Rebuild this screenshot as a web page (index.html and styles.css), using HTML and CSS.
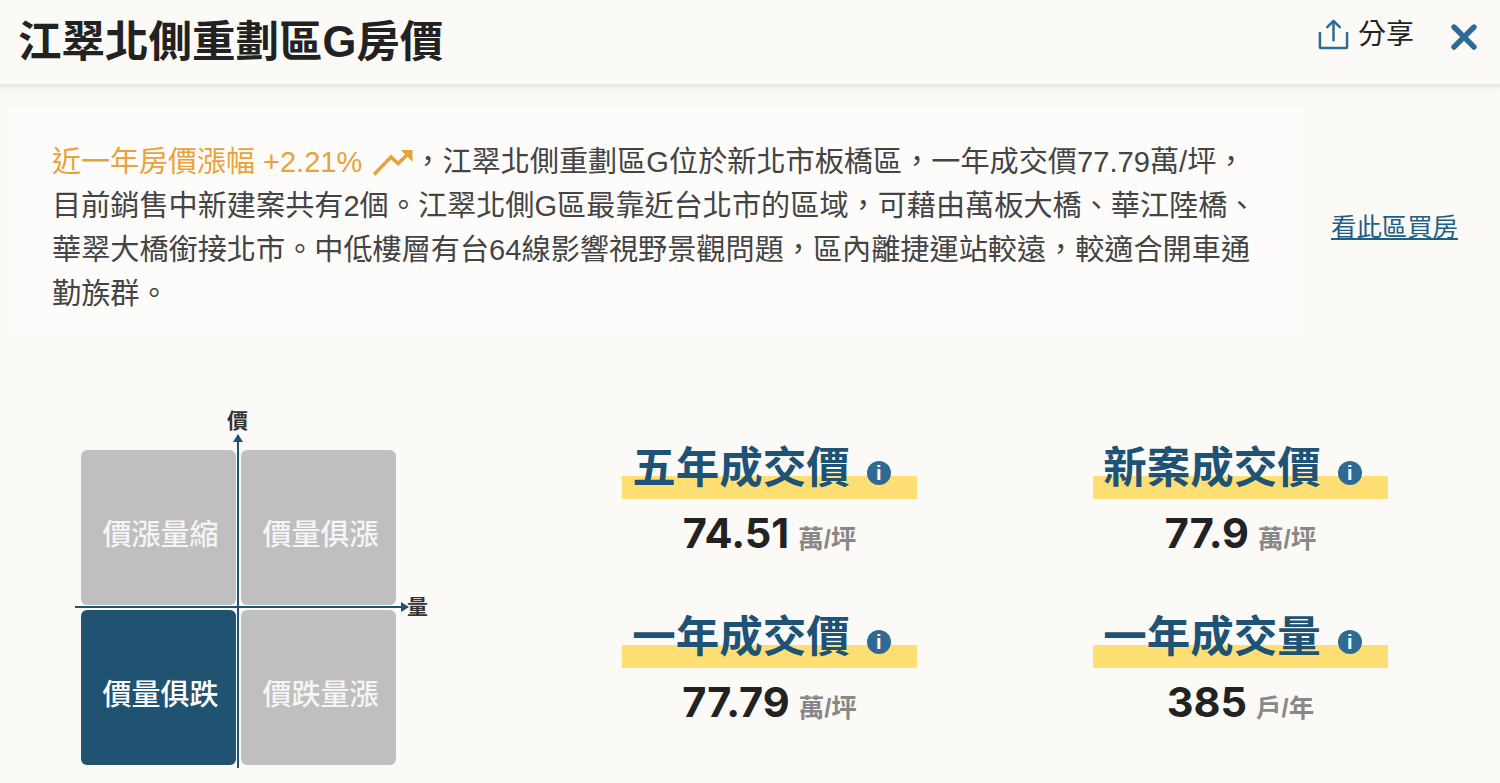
FILE: index.html
```html
<!DOCTYPE html>
<html lang="zh-Hant">
<head>
<meta charset="utf-8">
<title>江翠北側重劃區G房價</title>
<link rel="stylesheet" href="styles.css">
</head>
<body>
<header class="header">
  <h1 class="title">江翠北側重劃區G房價</h1>
  <div class="actions">
    <a class="share">
      <svg class="share-icon" viewBox="0 0 32 32" fill="none" stroke="#2f6a94" stroke-width="2.6" stroke-linecap="round" stroke-linejoin="round"><path d="M2 14.500V29a1 1 0 0 0 1 1h26a1 1 0 0 0 1-1V14.500"/><path d="M16 22V2.500"/><path d="M9.500 8.500 16 2l6.500 6.500"/></svg>
      <span>分享</span>
    </a>
    <svg class="close" viewBox="0 0 26 26" fill="none" stroke="#2f6a94" stroke-width="5.4" stroke-linecap="round"><path d="M3 3l20 20M23 3 3 23"/></svg>
  </div>
</header>
<section class="intro">
  <p class="intro-text"><span class="rise">近一年房價漲幅 +2.21%<svg class="trend" viewBox="0 0 40 26" fill="none" stroke="#e9a23b" stroke-width="3.6"><path d="M1 24.500 18 7l7 6.500L35 4"/><path d="M28 0H39.500V12Z" fill="#e9a23b" stroke="none"/></svg></span>&#xFF0C;江翠北側重劃區G位於新北市板橋區&#xFF0C;一年成交價77.79萬/坪&#xFF0C;目前銷售中新建案共有2個。江翠北側G區最靠近台北市的區域&#xFF0C;可藉由萬板大橋、華江陸橋、華翠大橋銜接北市。中低樓層有台64線影響視野景觀問題&#xFF0C;區內離捷運站較遠&#xFF0C;較適合開車通勤族群。</p>
  <a class="buy-link">看此區買房</a>
</section>
<main class="main">
  <div class="quad">
    <span class="axis-label axis-label-y">價</span>
    <span class="axis-label axis-label-x">量</span>
    <div class="cell">價漲量縮</div>
    <div class="cell">價量俱漲</div>
    <div class="cell cell-on">價量俱跌</div>
    <div class="cell">價跌量漲</div>
    <span class="axis axis-y"></span>
    <span class="axis axis-x"></span>
  </div>
  <div class="stats">
    <div class="stat">
      <div class="stat-title"><span>五年成交價</span><i class="info">i</i></div>
      <div class="stat-value">74.51<small>萬/坪</small></div>
    </div>
    <div class="stat">
      <div class="stat-title"><span>新案成交價</span><i class="info">i</i></div>
      <div class="stat-value">77.9<small>萬/坪</small></div>
    </div>
    <div class="stat">
      <div class="stat-title"><span>一年成交價</span><i class="info">i</i></div>
      <div class="stat-value">77.79<small>萬/坪</small></div>
    </div>
    <div class="stat">
      <div class="stat-title"><span>一年成交量</span><i class="info">i</i></div>
      <div class="stat-value">385<small>戶/年</small></div>
    </div>
  </div>
</main>
</body>
</html>
```
FILE: styles.css
```css
* { box-sizing: border-box; }
html, body { margin: 0; height: 783px; overflow: hidden; }
body {
  background: #fbfaf7;
  color: #222;
  font-family: "Liberation Sans", "Noto Sans CJK TC", sans-serif;
}
.header {
  height: 84px;
  display: flex;
  align-items: flex-start;
  justify-content: space-between;
  padding: 0 23px 0 18px;
  box-shadow: 0 3px 2px #e8e7e3, 0 6px 6px #f4f3f0;
}
.title {
  margin: 12px 0 0;
  font-size: 43.500px;
  line-height: 60px;
  font-weight: 700;
  color: #222;
}
.actions { display: flex; align-items: center; gap: 37px; margin-top: 15px; }
.share { display: flex; align-items: center; gap: 9px; font-size: 28px; line-height: 38px; color: #222; }
.share span { padding-top: 1px; }
.share-icon { width: 31px; height: 33px; }
.close { width: 26px; height: 26px; margin-top: 5px; }
.intro {
  display: flex;
  align-items: center;
  width: 1296px;
  height: 225px;
  margin: 26px 0 0 8px;
  padding: 10px 0 0 44px;
  background: #fdfcfa;
  position: relative;
}
.intro-text {
  margin: 0;
  width: 1208px;
  font-size: 29.150px;
  line-height: 44px;
  color: #444;
}
.rise { color: #e9a23b; font-size: 29px; }
.trend { width: 40px; height: 26px; margin-left: 11px; vertical-align: -4px; }
.buy-link {
  position: absolute;
  left: 1323px;
  top: 99px;
  white-space: nowrap;
  font-size: 25.400px;
  line-height: 36px;
  color: #1f5f85;
  text-decoration: underline;
}
.main { display: flex; padding: 115px 0 0 81px; }
.quad {
  position: relative;
  display: grid;
  grid-template-columns: 155px 155px;
  grid-template-rows: 155px 155px;
  gap: 5px;
  width: 315px;
  height: 315px;
}
.cell {
  display: flex;
  align-items: center;
  justify-content: center;
  padding: 9px 0 0 4px;
  border-radius: 6px;
  background: #bfbfbf;
  color: #f5f5f5;
  font-size: 29px;
  font-weight: 500;
}
.cell-on { background: #205272; color: #fff; }
.axis { position: absolute; background: #205272; }
.axis-y { left: 156px; top: -15px; width: 2px; height: 333px; }
.axis-x { left: -6px; top: 156px; width: 333px; height: 2px; }
.axis-y::before {
  content: ""; position: absolute; left: -4px; top: -1px;
  border-left: 5px solid transparent; border-right: 5px solid transparent; border-bottom: 8px solid #205272;
}
.axis-x::after {
  content: ""; position: absolute; right: -1px; top: -4px;
  border-top: 5px solid transparent; border-bottom: 5px solid transparent; border-left: 8px solid #205272;
}
.axis-label { position: absolute; font-size: 21px; line-height: 24px; font-weight: 700; color: #333; }
.axis-label-y { left: 146px; top: -41px; }
.axis-label-x { left: 326px; top: 145px; }
.stats {
  display: grid;
  grid-template-columns: 295px 295px;
  column-gap: 176px;
  row-gap: 15px;
  margin-left: 226px;
  margin-top: -8px;
}
.stat { display: flex; flex-direction: column; align-items: center; }
.stat-title {
  display: flex;
  align-items: center;
  justify-content: center;
  gap: 17px;
  width: 295px;
  height: 57px;
  padding: 0 16px 4px 0;
  background: linear-gradient(#ffdf73, #ffdf73) no-repeat 0 34px / 295px 23px;
  font-size: 43.500px;
  line-height: 53px;
  font-weight: 700;
  color: #1f5375;
}
.info {
  display: inline-flex;
  align-items: center;
  justify-content: center;
  width: 24px;
  height: 24px;
  margin-top: 9px;
  border-radius: 50%;
  background: #2f6a94;
  color: #fff;
  font-size: 20px;
  line-height: 24px;
  font-weight: 700;
  font-style: normal;
  font-family: "Liberation Sans", sans-serif;
}
.stat-value {
  font-family: Inter, "Liberation Sans", sans-serif;
  font-size: 41.500px;
  line-height: 60px;
  font-weight: 700;
  color: #222;
  margin-top: 4px;
}
.stat-value small {
  font-family: "Liberation Sans", "Noto Sans CJK TC", sans-serif;
  font-size: 25.500px;
  color: #888;
  margin-left: 9px;
}
```
